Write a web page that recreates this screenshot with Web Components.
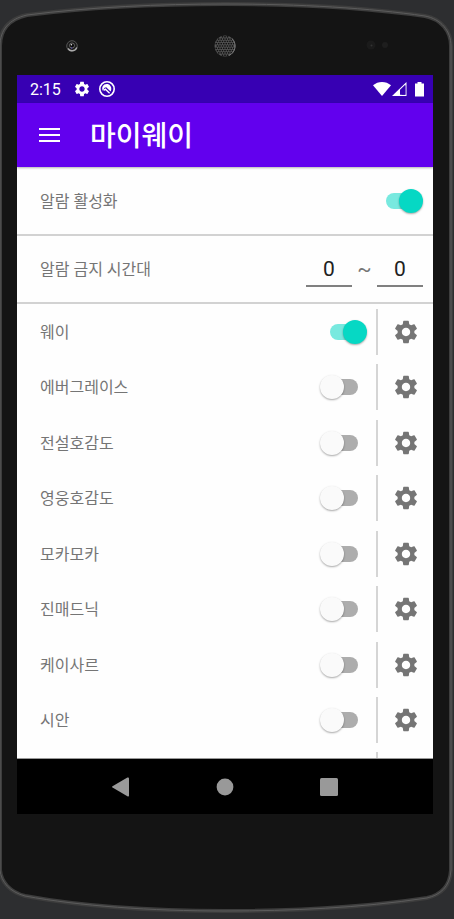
<!DOCTYPE html>
<html lang="ko">
<head>
<meta charset="utf-8">
<meta name="viewport" content="width=device-width, initial-scale=1">
<title>마이웨이</title>
<style>
  body { margin: 0; background: #2d2e30; font-family: Roboto, "Noto Sans CJK KR", sans-serif; }
</style>
</head>
<body>
<device-frame>
  <status-bar time="2:15"></status-bar>
  <app-bar>마이웨이</app-bar>
  <setting-row checked>알람 활성화</setting-row>
  <time-range-row from="0" to="0">알람 금지 시간대</time-range-row>
  <alarm-list>
    <alarm-row checked>웨이</alarm-row>
    <alarm-row>에버그레이스</alarm-row>
    <alarm-row>전설호감도</alarm-row>
    <alarm-row>영웅호감도</alarm-row>
    <alarm-row>모카모카</alarm-row>
    <alarm-row>진매드닉</alarm-row>
    <alarm-row>케이사르</alarm-row>
    <alarm-row>시안</alarm-row>
  </alarm-list>
  <nav-bar></nav-bar>
</device-frame>

<script>
const GEAR = 'M19.14 12.94c.04-.3.06-.61.06-.94 0-.32-.02-.64-.07-.94l2.03-1.58c.18-.14.23-.41.12-.61l-1.92-3.32c-.12-.22-.37-.29-.59-.22l-2.39.96c-.5-.38-1.03-.7-1.62-.94l-.36-2.54c-.04-.24-.24-.41-.48-.41h-3.84c-.24 0-.43.17-.47.41l-.36 2.54c-.59.24-1.13.57-1.62.94l-2.39-.96c-.22-.08-.47 0-.59.22L2.74 8.87c-.12.21-.08.47.12.61l2.03 1.58c-.05.3-.09.63-.09.94s.02.64.07.94l-2.03 1.58c-.18.14-.23.41-.12.61l1.92 3.32c.12.22.37.29.59.22l2.39-.96c.5.38 1.03.7 1.62.94l.36 2.54c.05.24.24.41.48.41h3.84c.24 0 .44-.17.47-.41l.36-2.54c.59-.24 1.13-.56 1.62-.94l2.39.96c.22.08.47 0 .59-.22l1.92-3.32c.12-.22.07-.47-.12-.61l-2.01-1.58zM12 15.6c-1.98 0-3.6-1.62-3.6-3.6s1.62-3.6 3.6-3.6 3.6 1.62 3.6 3.6-1.62 3.6-3.6 3.6z';

const BASE = `
  :host, * { box-sizing: border-box; }
  svg { display: block; flex: none; }
  button { appearance: none; border: 0; padding: 0; margin: 0; background: none; color: inherit; display: grid; place-items: center; cursor: pointer; }
`;
const ROW = BASE + `
  label { color: #757575; font-size: 16px; line-height: 24px; padding-top: 2px; }
  .switch {
    appearance: none; margin: 0; width: 47px; height: 28px; flex: none;
    display: grid; align-items: center; cursor: pointer;
  }
  .switch::before, .switch::after { content: ""; grid-area: 1 / 1; }
  .switch::before { width: 28px; height: 16px; border-radius: 8px; background: #adadad; justify-self: center; }
  .switch::after {
    width: 24px; height: 24px; border-radius: 50%; background: #fafafa; justify-self: start;
    box-shadow: 0 1px 2px rgba(0,0,0,.35);
  }
  .switch:checked::before { background: #78e9df; }
  .switch:checked::after { background: #06d8c4; justify-self: end; }
`;

function define(name, css, html) {
  customElements.define(name, class extends HTMLElement {
    connectedCallback() {
      if (this.shadowRoot) return;
      const root = this.attachShadow({ mode: 'open' });
      root.innerHTML = '<style>' + css + '</style>' + (typeof html === 'function' ? html(this) : html);
    }
  });
}

const HOLES = (() => {
  let out = '';
  for (let row = -4; row <= 4; row++)
    for (let col = -4; col <= 4; col++) {
      const x = col * 2.5 + (row & 1 ? 1.25 : 0), y = row * 2.3;
      if (x * x + y * y < 92) out += `<rect x="${11 + x - .8}" y="${11 + y - .75}" width="1.6" height="1.5" fill="#111"/>`;
    }
  return out;
})();

const SHELL = 'M0 46C0 30 9 19 27 15C90 7 160 4 225 4C300 4 370 8 425 16C441 19 451 31 451 46V870C450 887 440 895 427 898C360 908 290 911 225 911C150 911 80 906 25 896C10 892 1 882 0 870Z';

define('device-frame', BASE + `
  :host { display: grid; min-height: 100vh; }
  .shell, .body { grid-area: 1 / 1; }
  .shell { width: 100%; height: 100%; min-height: 0; contain: size; }
  .body { display: grid; grid-template-rows: 75px 1fr 105px; padding: 0 21px 0 17px; z-index: 1; min-width: 0; }
  .top { display: grid; grid-template-columns: 1fr auto 1fr; align-items: center; padding: 17px 43px 0; }
  .top :first-child { margin-left: 6px; }
  .top :last-child { justify-self: end; }
  .screen { display: flex; flex-direction: column; background: #fefefe; min-width: 0; overflow: hidden; }
`, `
  <svg class="shell" viewBox="0 0 454 919" preserveAspectRatio="none" aria-hidden="true">
    <path d="${SHELL}" fill="#141414" stroke="#3d3d3d" stroke-width="4"/>
    <path d="${SHELL}" fill="none" stroke="#5c5c5c" stroke-width="1"/>
  </svg>
  <div class="body">
    <div class="top" aria-hidden="true">
      <svg width="12" height="12" viewBox="0 0 12 12">
        <circle cx="6" cy="6" r="5.3" fill="#1b1b1b" stroke="#555" stroke-width="1"/>
        <path d="M2 8.5A5 5 0 0 0 10.8 7.5" fill="none" stroke="#aaa" stroke-width="1.4"/>
        <circle cx="6" cy="5.5" r="2.5" fill="#080808" stroke="#777" stroke-width=".8"/>
        <circle cx="5.4" cy="4.8" r=".8" fill="#ddd"/><circle cx="5.6" cy="8" r=".7" fill="#5349a8"/>
      </svg>
      <svg width="22" height="22" viewBox="0 0 22 22"><circle cx="11" cy="11" r="10.5" fill="#565656"/>${HOLES}<path d="M18 3.5A10.5 10.5 0 0 1 15 20.5" fill="none" stroke="#888" stroke-width=".8"/></svg>
      <svg width="24" height="12" viewBox="0 0 24 12"><circle cx="5" cy="5" r="4.5" fill="#1b1b1b"/><circle cx="5.5" cy="5.5" r="1" fill="#333"/><circle cx="19" cy="5" r="3" fill="#1e1e1e"/></svg>
    </div>
    <main class="screen"><slot></slot></main>
  </div>
`);

define('status-bar', BASE + `
  :host { display: flex; align-items: center; height: 28px; flex: none; background: #3700b3; color: #fff; padding: 0 9px 0 13px; }
  time { font-size: 16px; line-height: 28px; margin-right: 12px; padding-top: 1px; }
  .gap { margin-left: 8px; }
  .end { margin-left: auto; display: flex; align-items: center; }
`, el => `
  <time>${el.getAttribute('time')}</time>
  <svg width="18" height="18" viewBox="0 0 24 24" fill="#fff"><path d="${GEAR}"/></svg>
  <svg class="gap" width="16" height="16" viewBox="0 0 16 16" fill="none" stroke="#fff">
    <circle cx="8" cy="8" r="7.2" stroke-width="1.6"/>
    <path d="M3.8 9.8A4.4 4.4 0 0 1 11.6 5.2C12.6 6.8 12.4 9 11.6 10.4L7.2 6.2C6 6.2 5 7 4.6 8.4Z" fill="#fff" stroke="none"/>
    <path d="M4.6 9.4L6.4 8.2L10.6 12.2" stroke-width="1.4"/>
  </svg>
  <span class="end">
    <svg width="51" height="16" viewBox="0 0 51 16">
      <path d="M0 4.3C5-.2 13-.2 18 4.3L9 15Z" fill="#fff"/>
      <path d="M33.5 1V15H19Z" fill="#fff"/><path d="M27 8.8L32.4 3.6V13.8H27Z" fill="#3700b3"/><path d="M28.6 8.4L32.4 4.6V13.8H28.6Z" fill="#3700b3"/>
      <path d="M44.5 1h4v1.5H51V15.5H42V2.5h2.5Z" fill="#fff"/>
    </svg>
  </span>
`);

define('app-bar', BASE + `
  :host { display: flex; align-items: center; height: 64px; flex: none; background: #6200ee; color: #fff; padding-left: 17px; gap: 25px; z-index: 1; box-shadow: 0 1px 2px rgba(0,0,0,.3); }
  button { width: 31px; height: 48px; }
  h1 { margin: 0; padding-top: 4px; font-size: 28px; line-height: 40px; font-weight: 500; }
`, `
  <button type="button" aria-label="메뉴"><svg width="21" height="14" viewBox="0 0 21 14" fill="#fff"><path d="M0 0h21v2H0zM0 6h21v2H0zM0 12h21v2H0z"/></svg></button>
  <h1><slot></slot></h1>
`);

define('setting-row', ROW + `
  :host { display: flex; align-items: center; justify-content: space-between; height: 69px; flex: none; padding: 0 10px 0 23px; border-bottom: 2px solid #d2d2d2; }
`, el => `
  <label for="on"><slot></slot></label>
  <input class="switch" type="checkbox" role="switch" id="on" ${el.hasAttribute('checked') ? 'checked' : ''}>
`);

define('time-range-row', ROW + `
  :host { display: flex; align-items: center; justify-content: space-between; height: 68px; flex: none; padding: 0 10px 0 23px; border-bottom: 2px solid #d2d2d2; }
  .range { display: flex; align-items: center; color: #757575; font-size: 21px; line-height: 32px; }
  .range span { width: 25px; text-align: center; }
  input { width: 46px; height: 36px; padding: 2px 0 0; border: 0; border-bottom: 2px solid #808080; border-radius: 0; background: none; text-align: center; font: 21px Roboto, sans-serif; color: #212121; outline: 0; }
`, el => `
  <label for="from"><slot></slot></label>
  <div class="range">
    <input id="from" type="text" inputmode="numeric" value="${el.getAttribute('from')}">
    <span>~</span>
    <input type="text" inputmode="numeric" aria-label="종료 시간" value="${el.getAttribute('to')}">
  </div>
`);

define('alarm-list', BASE + `
  :host { display: flex; flex-direction: column; flex: 1; min-height: 0; overflow: hidden; border-bottom: 1px solid #999; }
  ::slotted(*) { height: 55px; flex: none; }
  ::slotted(:nth-child(even)) { height: 56px; }
  .next { height: 6px; flex: none; margin: 4px 55px 0 0; border-right: 2px solid #d5d5d5; }
`, `<slot></slot><div class="next"></div>`);

define('alarm-row', ROW + `
  :host { display: flex; align-items: center; padding-left: 23px; }
  label { flex: 1; }
  .line { width: 2px; height: 46px; margin-left: 9px; background: #d5d5d5; }
  button { width: 55px; height: 48px; }
`, el => `
  <label for="on"><slot></slot></label>
  <input class="switch" type="checkbox" role="switch" id="on" ${el.hasAttribute('checked') ? 'checked' : ''}>
  <span class="line"></span>
  <button type="button" aria-label="설정"><svg width="28" height="28" viewBox="0 0 24 24" fill="#757575"><path d="${GEAR}"/></svg></button>
`);

define('nav-bar', BASE + `
  :host { display: flex; justify-content: center; height: 55px; flex: none; background: #000; }
  button { width: 25%; }
`, `
  <button type="button" aria-label="뒤로"><svg width="18" height="20" viewBox="0 0 18 20" fill="#999"><path d="M.5 9.2L15.4.6Q17 0 17 1.6V18.4Q17 20 15.4 19.2L.5 10.6Q-.3 9.9.5 9.2Z"/></svg></button>
  <button type="button" aria-label="홈"><svg width="18" height="18" viewBox="0 0 18 18" fill="#999"><circle cx="9" cy="9" r="8.4"/></svg></button>
  <button type="button" aria-label="최근 앱"><svg width="18" height="18" viewBox="0 0 18 18" fill="#999"><rect width="18" height="18" rx="1.5"/></svg></button>
`);
</script>
</body>
</html>
